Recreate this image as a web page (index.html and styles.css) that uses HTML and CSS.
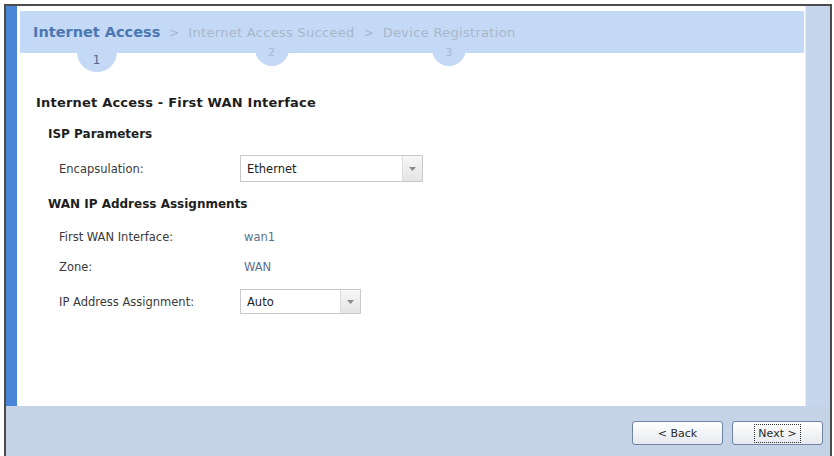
FILE: index.html
```html
<!DOCTYPE html>
<html lang="en">
  <head>
    <meta charset="UTF-8" />
    <meta name="viewport" content="width=device-width, initial-scale=1.0" />
    <title>Internet Access | Setup Wizard</title>
    <link rel="stylesheet" href="styles.css">
  </head>
  <body>
    <div class="window">
      <div class="window-body">
        <div class="sidebar"></div>

        <div class="page">
          <!-- Wizard steps -->
          <div class="steps">
            <div class="step current">
              <span class="step-name">Internet Access</span>
              <span class="step-num big">1</span>
            </div>
            <span class="step-sep">&gt;</span>
            <div class="step">
              <span class="step-name">Internet Access Succeed</span>
              <span class="step-num">2</span>
            </div>
            <span class="step-sep">&gt;</span>
            <div class="step">
              <span class="step-name">Device Registration</span>
              <span class="step-num">3</span>
            </div>
          </div>

          <!-- Form -->
          <div class="form">
            <h1>Internet Access - First WAN Interface</h1>

            <h2>ISP Parameters</h2>
            <div class="row row-encap">
              <label>Encapsulation:</label>
              <div class="select select-wide">
                <span>Ethernet</span>
                <i class="select-arrow">
                  <svg width="7" height="4" viewBox="0 0 7 4"><path d="M0 0h7L3.5 4z" fill="#8a8a8a"/></svg>
                </i>
              </div>
            </div>

            <h2 class="h2-wan">WAN IP Address Assignments</h2>
            <div class="row row-iface">
              <label>First WAN Interface:</label>
              <span class="value">wan1</span>
            </div>
            <div class="row row-zone">
              <label>Zone:</label>
              <span class="value">WAN</span>
            </div>
            <div class="row row-ip">
              <label>IP Address Assignment:</label>
              <div class="select select-narrow">
                <span>Auto</span>
                <i class="select-arrow">
                  <svg width="7" height="4" viewBox="0 0 7 4"><path d="M0 0h7L3.5 4z" fill="#8a8a8a"/></svg>
                </i>
              </div>
            </div>
          </div>
        </div>

        <div class="rail"></div>
      </div>

      <div class="buttons">
        <button>&lt; Back</button>
        <button class="focused"><span>Next &gt;</span></button>
      </div>
    </div>
  </body>
</html>
```

FILE: styles.css
```css
body {
  margin: 0;
  background: #ffffff;
  font-family: "DejaVu Sans", Verdana, sans-serif;
}

.window {
  margin: 4px 2px 0 4px;
  border: 2px solid #4c4c4c;
  border-bottom: none;
  height: 450px;
  display: flex;
  flex-direction: column;
}

.window-body {
  display: flex;
  height: 400px;
}

.sidebar {
  width: 11px;
  background: #4a86d8;
}

.page {
  flex: 1;
  background: #ffffff;
  padding: 5px 1px 0 3px;
}

.rail {
  width: 24px;
  background: #c5d6ec;
  border-left: 1px solid #e4ecf7;
}

/* steps band */
.steps {
  height: 42px;
  box-sizing: border-box;
  background: #c3d9f5;
  padding: 12px 0 0 13px;
  display: flex;
  align-items: baseline;
}

.step {
  display: flex;
  flex-direction: column;
  align-items: center;
}

.step-name {
  position: relative;
  z-index: 1;
  font-size: 13px;
  line-height: 18px;
  letter-spacing: 0.3px;
  color: #a9b7ca;
  white-space: nowrap;
}

.current .step-name {
  font-size: 14.5px;
  font-weight: bold;
  letter-spacing: 0;
  color: #4b77b2;
}

.step-num {
  width: 34px;
  height: 34px;
  margin-top: -10px;
  border-radius: 50%;
  background: #c3d9f5;
  display: flex;
  align-items: flex-end;
  justify-content: center;
  box-sizing: border-box;
  padding-bottom: 6px;
  font-size: 11px;
  line-height: 14px;
  color: #a7bad3;
}

.step-num.big {
  width: 40px;
  height: 40px;
  margin-top: -9px;
  padding-bottom: 5px;
  font-size: 12px;
  color: #4d6b92;
}

.step-sep {
  margin: 0 9px;
  font-size: 12px;
  color: #a9b7ca;
}

/* form */
.form {
  padding-left: 16px;
}

h1 {
  margin: 42px 0 0;
  font-size: 13px;
  letter-spacing: 0.2px;
  line-height: 16px;
  color: #1e1e1e;
}

h2 {
  margin: 15px 0 0 12px;
  font-size: 12px;
  line-height: 16px;
  color: #1e1e1e;
}

.h2-wan {
  margin-top: 14px;
}

.row {
  display: flex;
  align-items: center;
  padding-left: 23px;
  height: 20px;
  font-size: 11.5px;
  color: #3a3a3a;
}

.row label {
  width: 181px;
}

.row-encap {
  height: 27px;
  margin-top: 13px;
}

.row-iface {
  margin-top: 15px;
}

.row-zone {
  margin-top: 10px;
}

.row-ip {
  height: 25px;
  margin-top: 12px;
}

.value {
  padding-left: 4px;
  color: #5b7190;
}

.select {
  height: 100%;
  box-sizing: border-box;
  border: 1px solid #c9c9c9;
  display: flex;
  align-items: center;
  background: #ffffff;
  color: #222;
}

.select span {
  flex: 1;
  padding-left: 6px;
}

.select-wide {
  width: 183px;
}

.select-narrow {
  width: 121px;
}

.select-arrow {
  width: 19px;
  height: 100%;
  border-left: 1px solid #dedede;
  background: linear-gradient(#f7f7f7, #e4e4e4);
  display: flex;
  align-items: center;
  justify-content: center;
}

/* bottom button bar */
.buttons {
  height: 50px;
  box-sizing: border-box;
  background: #c4d3e6;
  display: flex;
  justify-content: flex-end;
  gap: 9px;
  padding: 15px 7px 0 0;
}

button {
  width: 91px;
  height: 24px;
  border: 1px solid #6f84a2;
  border-radius: 3px;
  background: linear-gradient(#ffffff, #e6e9ee);
  font-family: "DejaVu Sans", Verdana, sans-serif;
  font-size: 11px;
  color: #2a2a2a;
  padding: 0;
}

.focused span {
  border: 1px dotted #333;
  padding: 2px 3px;
}
```
